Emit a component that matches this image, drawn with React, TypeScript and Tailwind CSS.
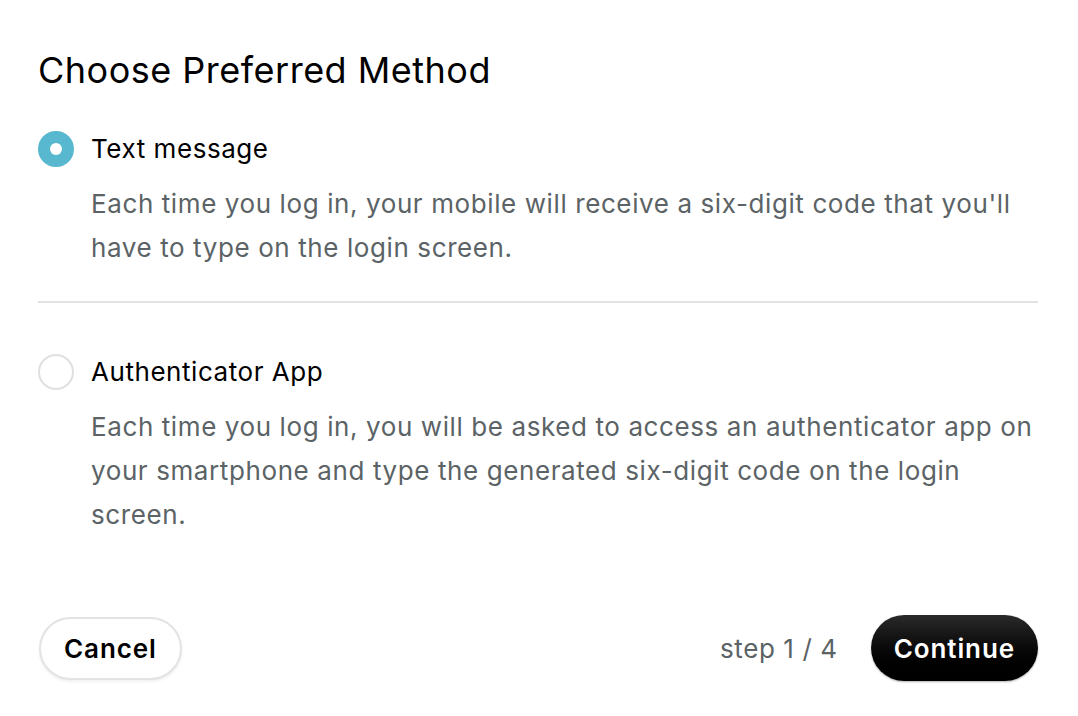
import React, { useState } from 'react';

const methods = [
  {
    id: 'sms',
    label: 'Text message',
    text: "Each time you log in, your mobile will receive a six-digit code that you'll have to type on the login screen.",
  },
  {
    id: 'app',
    label: 'Authenticator App',
    text: 'Each time you log in, you will be asked to access an authenticator app on your smartphone and type the generated six-digit code on the login screen.',
  },
];

export default function App() {
  const [selected, setSelected] = useState('sms');

  return (
    <div className="w-[1078px] h-[716px] bg-white text-black pl-[38px] pr-[40px] pt-[46px] font-['Inter',sans-serif] flex flex-col">
      <h1 className="text-[36px] leading-[48px] font-normal tracking-[0.5px]">Choose Preferred Method</h1>

      <div className="mt-[37px] flex flex-col">
        {methods.map((m, i) => (
          <div key={m.id} className={i > 0 ? 'border-t-2 border-[#e2e2e2] pt-[51px]' : 'pb-[31px]'}>
            <button className="flex items-center gap-[17px] text-left" onClick={() => setSelected(m.id)}>
              {selected === m.id ? (
                <span className="w-9 h-9 rounded-full bg-[#57b8cf] flex items-center justify-center">
                  <span className="w-3 h-3 rounded-full bg-white" />
                </span>
              ) : (
                <span className="w-9 h-9 rounded-full border-2 border-[#e0e0e0] bg-white" />
              )}
              <span className="text-[26px] leading-[36px] tracking-[0.55px]">{m.label}</span>
            </button>
            <p className="pl-[53px] mt-[15px] text-[26px] leading-[44px] tracking-[0.6px] text-[#5b6366]">{m.text}</p>
          </div>
        ))}
      </div>

      <div className="mt-auto mb-[35px] flex items-center justify-between">
        <button className="h-[63px] px-[23px] ml-px rounded-full border-2 border-[#e3e3e3] bg-white shadow-[0_2px_3px_rgba(0,0,0,0.06)] text-[26px] font-semibold tracking-[0.9px]">
          Cancel
        </button>
        <div className="flex items-center gap-[33px]">
          <span className="text-[26px] text-[#5b6366] tracking-[0.6px]">step 1 / 4</span>
          <button className="h-[66px] px-[23px] rounded-full bg-gradient-to-b from-[#2a2a2a] to-black text-white text-[26px] font-semibold tracking-[0.9px] shadow-[0_1px_2px_rgba(0,0,0,0.3)]">
            Continue
          </button>
        </div>
      </div>
    </div>
  );
}
